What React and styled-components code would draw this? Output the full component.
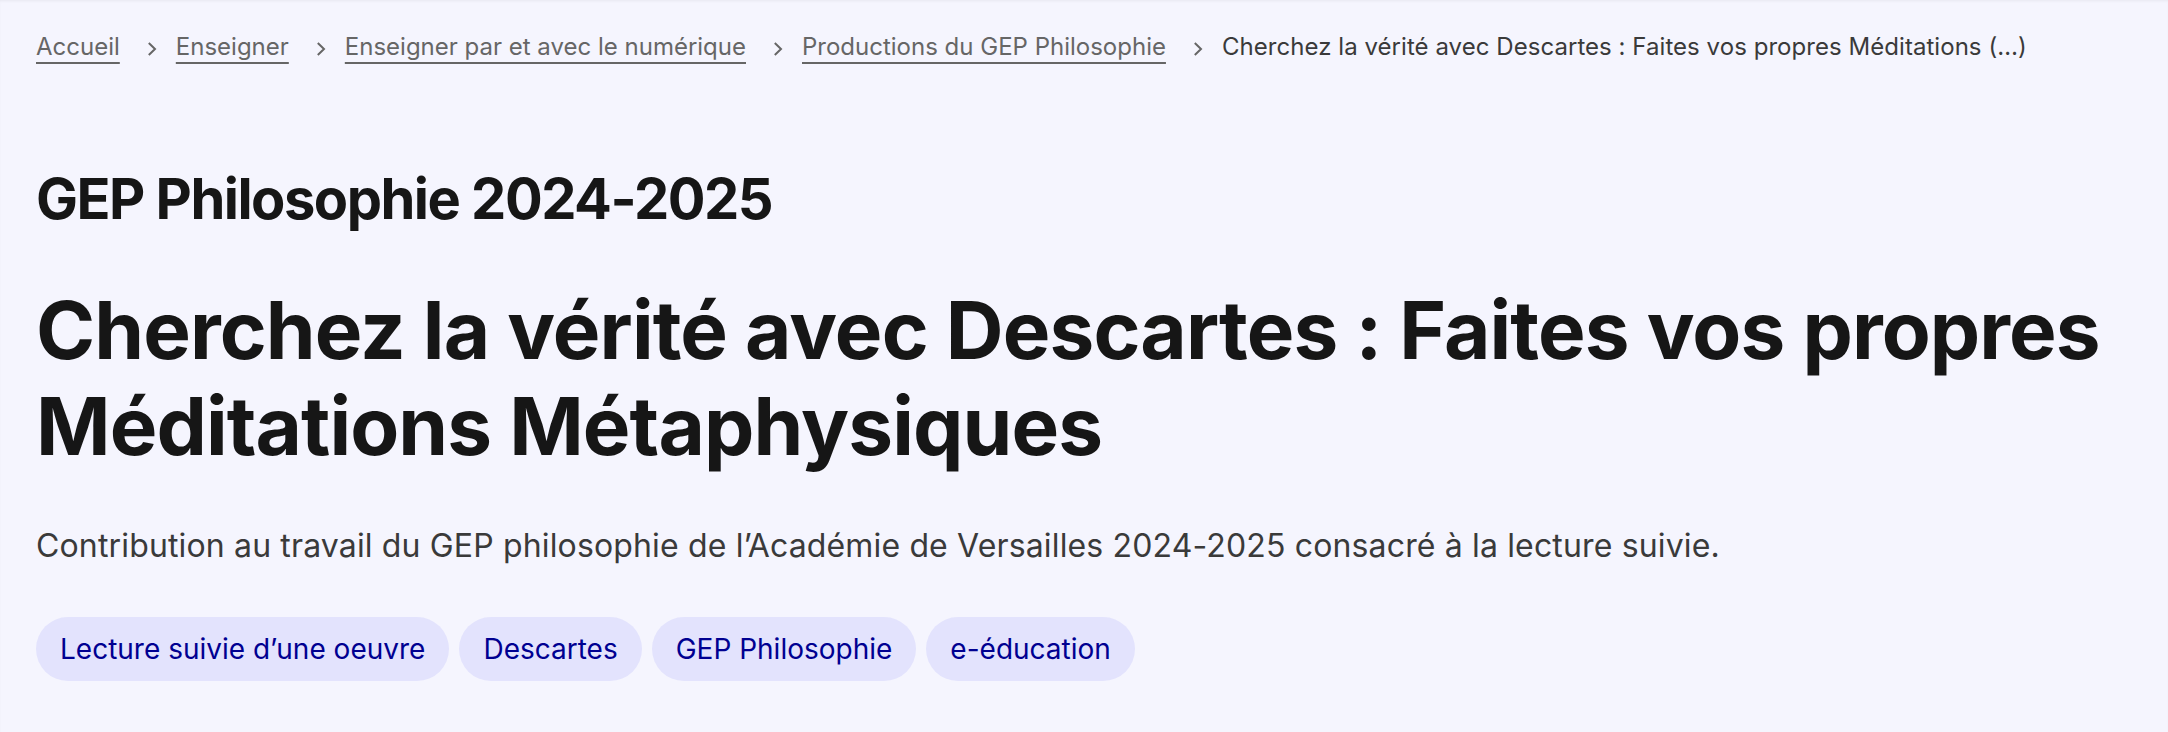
import React from 'react'
import styled, { createGlobalStyle } from 'styled-components'

const GlobalStyle = createGlobalStyle`
  html, body {
    margin: 0;
    background: #f5f5fe;
  }
  body {
    font-family: Inter, "Liberation Sans", sans-serif;
    color: #161616;
    -webkit-font-smoothing: antialiased;
  }
`

const crumbs = [
  'Accueil',
  'Enseigner',
  'Enseigner par et avec le numérique',
  'Productions du GEP Philosophie',
]

const tags = ['Lecture suivie d’une oeuvre', 'Descartes', 'GEP Philosophie', 'e-éducation']

const Chevron = () => (
  <svg width="10" height="16" viewBox="0 0 10 16" fill="none">
    <polyline
      points="1.8,2 8,8 1.8,14"
      stroke="#666"
      strokeWidth="2"
      strokeLinecap="butt"
      strokeLinejoin="miter"
    />
  </svg>
)

export default function App() {
  return (
    <>
      <GlobalStyle />
      <Page>
        <Breadcrumb>
          {crumbs.map(label => (
            <Crumb key={label}>
              <CrumbLink href="#">{label}</CrumbLink>
              <Separator><Chevron /></Separator>
            </Crumb>
          ))}
          <Crumb>
            <Current>Cherchez la vérité avec Descartes : Faites vos propres Méditations (…)</Current>
          </Crumb>
        </Breadcrumb>

        <Surtitle>GEP Philosophie 2024-2025</Surtitle>
        <Title>Cherchez la vérité avec Descartes : Faites vos propres Méditations Métaphysiques</Title>
        <Lead>
          Contribution au travail du GEP philosophie de l’Académie de Versailles 2024-2025 consacré à la lecture suivie.
        </Lead>

        <Tags>
          {tags.map(tag => (
            <li key={tag}>
              <Tag href="#">{tag}</Tag>
            </li>
          ))}
        </Tags>
      </Page>
    </>
  )
}

const Page = styled.main`
  min-height: 732px;
  box-sizing: border-box;
  padding: 27px 36px 40px;
  box-shadow: inset 0 2px 3px -1px rgba(0, 0, 0, 0.06);
`

const Breadcrumb = styled.ol`
  display: flex;
  flex-wrap: wrap;
  align-items: center;
  list-style: none;
  margin: 0;
  padding: 0;
  font-size: 24px;
  line-height: 40px;
`

const Crumb = styled.li`
  display: flex;
  align-items: center;
`

const CrumbLink = styled.a`
  color: #666;
  text-decoration: underline;
  text-decoration-thickness: 2px;
  text-underline-offset: 7px;
`

const Separator = styled.span`
  display: flex;
  margin: 4px 19px 0 27px;
`

const Current = styled.span`
  color: #3a3a3a;
  letter-spacing: 0.05px;
`

const Surtitle = styled.h2`
  margin: 96px 0 0;
  font-size: 56px;
  line-height: 72px;
  font-weight: 700;
  letter-spacing: -1.5px;
  color: #161616;
`

const Title = styled.h1`
  margin: 47px 0 0;
  font-size: 80px;
  line-height: 96px;
  font-weight: 700;
  letter-spacing: -0.9px;
  color: #161616;
`

const Lead = styled.p`
  margin: 48px 0 0;
  font-size: 32px;
  line-height: 48px;
  letter-spacing: 0.15px;
  color: #3a3a3a;
`

const Tags = styled.ul`
  display: flex;
  flex-wrap: wrap;
  gap: 10px;
  list-style: none;
  margin: 47px 0 0;
  padding: 0;
`

const Tag = styled.a`
  display: inline-flex;
  align-items: center;
  box-sizing: border-box;
  min-height: 64px;
  padding: 8px 24px;
  border-radius: 32px;
  background: #e3e3fd;
  color: #000091;
  font-size: 28px;
  line-height: 48px;
  text-decoration: none;
`
